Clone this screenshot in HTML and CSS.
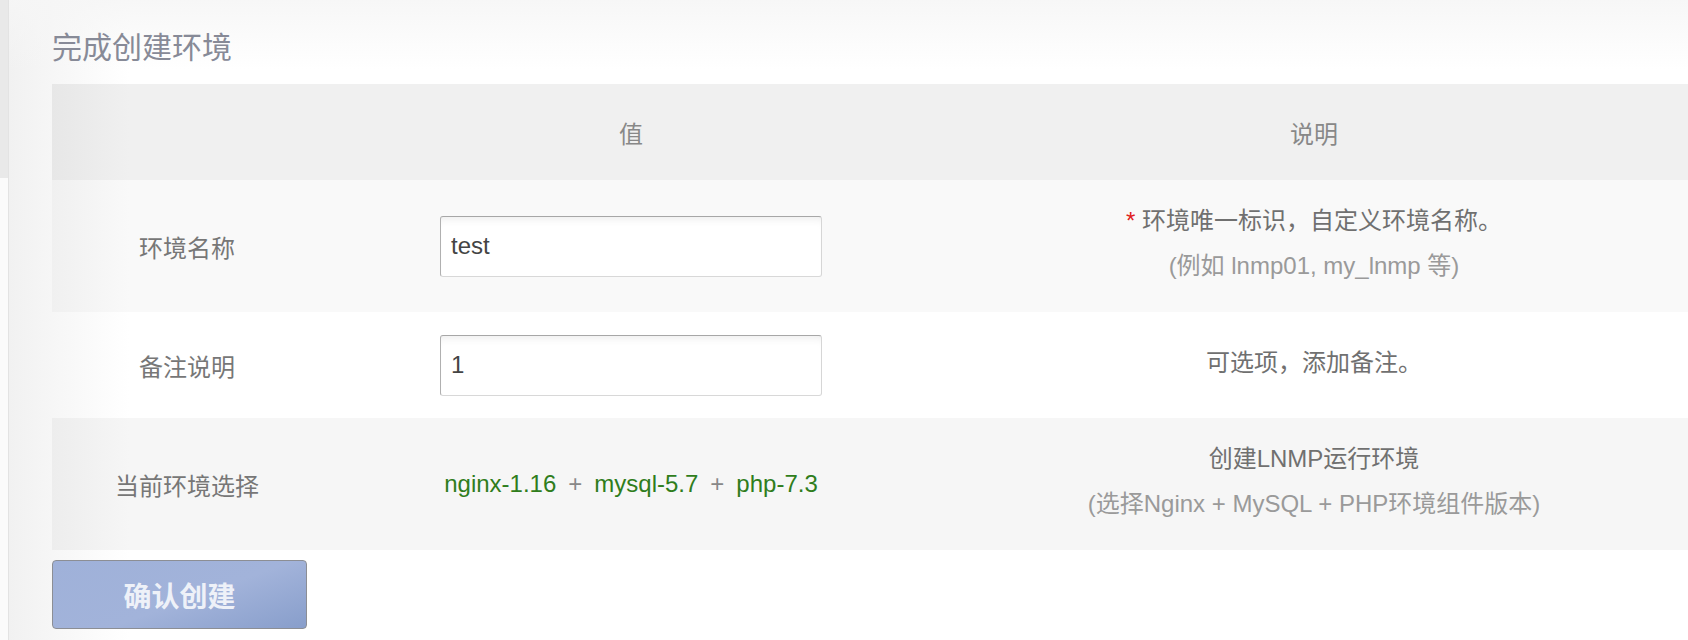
FILE: index.html
```html
<!DOCTYPE html>
<html lang="zh">
<head>
  <meta charset="UTF-8" />
  <title>完成创建环境</title>
  <link rel="stylesheet" href="styles.css">
</head>
<body>
  <div class="page">
    <div class="side"><div class="side-top"></div></div>

    <div class="main">
      <h2 class="title">完成创建环境</h2>

      <table class="env-table">
        <colgroup>
          <col class="col-label">
          <col class="col-value">
          <col>
        </colgroup>
        <thead>
          <tr>
            <th></th>
            <th>值</th>
            <th>说明</th>
          </tr>
        </thead>
        <tbody>
          <tr class="row-a">
            <td class="label">环境名称</td>
            <td><input type="text" class="field" value="test"></td>
            <td class="desc">
              <div><span class="req">*</span> 环境唯一标识，自定义环境名称。</div>
              <div class="sub">(例如 lnmp01, my_lnmp 等)</div>
            </td>
          </tr>
          <tr class="row-b">
            <td class="label">备注说明</td>
            <td><input type="text" class="field" value="1"></td>
            <td class="desc"><div>可选项，添加备注。</div></td>
          </tr>
          <tr class="row-c">
            <td class="label">当前环境选择</td>
            <td class="stack">
              <span class="ver">nginx-1.16</span><span class="plus">+</span><span class="ver">mysql-5.7</span><span class="plus">+</span><span class="ver">php-7.3</span>
            </td>
            <td class="desc">
              <div>创建LNMP运行环境</div>
              <div class="sub">(选择Nginx + MySQL + PHP环境组件版本)</div>
            </td>
          </tr>
        </tbody>
      </table>

      <button class="btn-create">确认创建</button>
    </div>
  </div>
</body>
</html>
```

FILE: styles.css
```css
:root {
  --text-label: #777;
  --text-desc: #707070;
  --text-sub: #9a9a9a;
  --green: #2f7d1c;
  --font: "Liberation Sans", "Noto Sans CJK SC", sans-serif;
}
html, body {
  margin: 0;
  padding: 0;
  height: 100%;
  background: #fff;
  font-family: var(--font);
}
.page {
  display: flex;
  height: 640px;
  overflow: hidden;
}
.side {
  width: 8px;
  flex: none;
  border-right: 1px solid #e3e3e3;
  background: #fbfbfb;
}
.side-top {
  height: 178px;
  background: #e9e9e9;
}
.main {
  flex: 1;
  padding: 0 0 0 43px;
  background:
    linear-gradient(to bottom, rgba(246,246,246,0.9), rgba(255,255,255,0) 70px),
    linear-gradient(to right, #f1f1f1, #fff 120px);
}
.title {
  margin: 0;
  padding-top: 28px;
  height: 58px;
  box-sizing: border-box;
  line-height: 40px;
  font-size: 30px;
  font-weight: normal;
  color: #878a97;
}
.env-table {
  width: 1636px;
  border-collapse: collapse;
  table-layout: fixed;
  margin-top: 26px;
}
.col-label { width: 270px; }
.col-value { width: 618px; }
.env-table thead tr { height: 96px; }
.env-table th {
  padding: 0;
  background: rgba(0,0,0,0.06);
  color: #888;
  font-size: 24px;
  font-weight: normal;
}
.env-table td {
  padding: 0;
  text-align: center;
  vertical-align: middle;
  font-size: 24px;
}
.row-a { height: 132px; }
.row-b { height: 106px; }
.row-c { height: 132px; }
.row-a td { background: rgba(0,0,0,0.022); }
.row-c td { background: rgba(0,0,0,0.035); }
.label {
  color: var(--text-label);
}
.field {
  width: 382px;
  height: 61px;
  box-sizing: border-box;
  padding: 0 10px;
  border: 1px solid;
  border-color: #a7a7a7 #d6d6d6 #d8d8d8 #b0b0b0;
  border-radius: 3px;
  background: #fff;
  box-shadow: inset 0 8px 8px -6px rgba(0,0,0,0.08);
  font-family: var(--font);
  font-size: 24px;
  color: #444;
  outline: none;
}
.stack .ver {
  color: var(--green);
}
.stack .plus {
  color: #888;
  margin: 0 12px;
}
.env-table td.desc {
  padding-bottom: 6px;
  line-height: 45px;
  color: var(--text-desc);
}
.desc .sub {
  color: var(--text-sub);
}
.req {
  color: #e02020;
}
.btn-create {
  display: block;
  margin-top: 10px;
  width: 255px;
  height: 69px;
  border: 1px solid #8c8e94;
  border-radius: 4px;
  background: linear-gradient(160deg, #9fb1d9 0%, #a2b3da 55%, #889ecb 100%);
  color: #eef1f8;
  font-family: var(--font);
  font-size: 28px;
  font-weight: bold;
  cursor: pointer;
}
```
